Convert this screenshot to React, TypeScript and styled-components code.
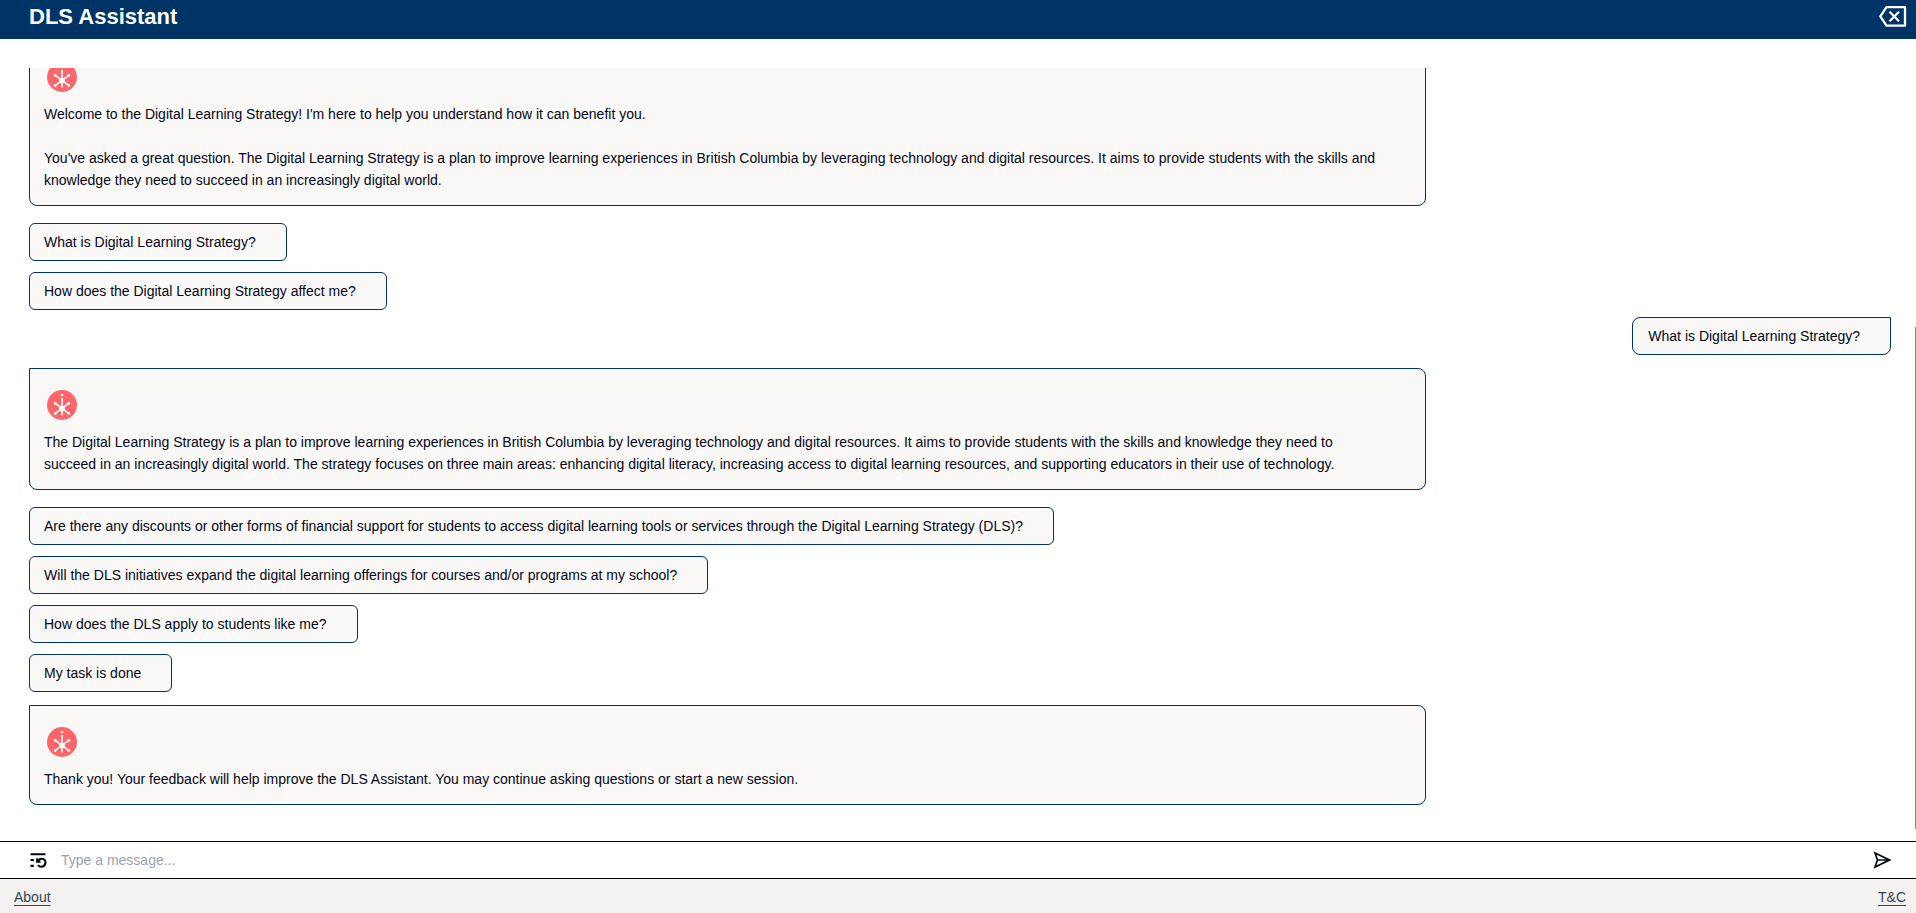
import React from "react";
import styled, { createGlobalStyle } from "styled-components";

const GlobalStyle = createGlobalStyle`
  *, *::before, *::after { box-sizing: border-box; }
  html, body, #root { height: 100%; }
  body {
    margin: 0;
    background: #fff;
    color: #020617;
    font-family: "Liberation Sans", Arial, sans-serif;
    font-size: 14px;
    line-height: 22px;
  }
  button, input { font: inherit; color: inherit; }
`;

const Page = styled.div`
  display: flex;
  flex-direction: column;
  height: 100%;
`;

const Header = styled.header`
  display: flex;
  flex: none;
  align-items: center;
  justify-content: space-between;
  height: 39px;
  padding: 0 9px 5px 29px;
  background: #003366;
  color: #fff;
`;

const Title = styled.h1`
  margin: 0;
  font-size: 22px;
  line-height: 28px;
`;

const IconButton = styled.button`
  display: flex;
  flex: none;
  padding: 0;
  border: 0;
  background: none;
  cursor: pointer;
`;

const Conversation = styled.main`
  position: relative;
  display: flex;
  flex: 1;
  min-height: 0;
  margin: 29px 0 12px;
`;

const Scroller = styled.div`
  display: flex;
  flex: 1;
  flex-direction: column-reverse;
  overflow-y: auto;
  padding: 0 25px 24px 29px;
  scrollbar-width: none;
`;

const ScrollThumb = styled.div`
  position: absolute;
  right: 0;
  bottom: 0;
  width: 1px;
  height: 66%;
  background: #888;
`;

const Messages = styled.div`
  display: flex;
  flex: none;
  flex-direction: column;
  align-items: flex-start;
`;

const BotCard = styled.article`
  width: 75%;
  margin-top: 13px;
  padding: 21px 40px 14px 14px;
  border: 1px solid #003366;
  border-radius: 0 8px 8px 8px;
  background: #faf9f8;
`;

const Avatar = styled.svg`
  display: block;
  width: 30px;
  height: 30px;
  margin: 0 0 11px 3px;
`;

const Text = styled.p`
  margin: 0;
  & + & { margin-top: 22px; }
`;

const Suggestions = styled.div`
  display: flex;
  flex-direction: column;
  align-items: flex-start;
  gap: 11px;
  margin-top: 17px;
`;

const Suggestion = styled.button`
  padding: 7px 30px 7px 14px;
  border: 1px solid #003366;
  border-radius: 6px;
  background: #faf9f8;
  text-align: left;
  cursor: pointer;
`;

const UserBubble = styled.div`
  align-self: flex-end;
  margin-top: 7px;
  padding: 7px 30px 7px 15px;
  border: 1px solid #003366;
  border-radius: 8px 0 8px 8px;
  background: #faf9f8;
`;

const Composer = styled.form`
  display: flex;
  flex: none;
  align-items: center;
  gap: 13px;
  height: 38px;
  padding: 0 25px 0 28px;
  border: solid #000;
  border-width: 1px 0;
`;

const MessageInput = styled.input`
  flex: 1;
  min-width: 0;
  padding: 0;
  border: 0;
  outline: 0;
  background: none;
  &::placeholder { color: #9ca3af; opacity: 1; }
`;

const Footer = styled.footer`
  display: flex;
  flex: none;
  justify-content: space-between;
  height: 34px;
  padding: 7px 10px 0 14px;
  background: #f3f2f1;
`;

const FooterLink = styled.a`
  color: #334155;
  text-underline-offset: 3px;
`;

function BotAvatar() {
  return (
    <Avatar viewBox="0 0 30 30" aria-hidden="true">
      <circle cx="15" cy="15" r="15" fill="#ff6669" />
      <path d="M15 8V25.5M8 13.2L22 23.6M22 13.2L8 23.6" stroke="#fff" strokeWidth="1.6" />
      <g fill="#fff">
        <circle cx="15" cy="18.4" r="2.8" />
        <circle cx="15" cy="5" r="1.3" />
        <circle cx="8.2" cy="13.3" r="1.4" />
        <circle cx="21.8" cy="13.3" r="1.4" />
        <circle cx="8.2" cy="23.5" r="1.4" />
        <circle cx="21.8" cy="23.5" r="1.4" />
      </g>
    </Avatar>
  );
}

function BotMessage({ paragraphs }: { paragraphs: string[] }) {
  return (
    <BotCard>
      <BotAvatar />
      {paragraphs.map((p) => (
        <Text key={p}>{p}</Text>
      ))}
    </BotCard>
  );
}

function SuggestionList({ items }: { items: string[] }) {
  return (
    <Suggestions>
      {items.map((item) => (
        <Suggestion type="button" key={item}>{item}</Suggestion>
      ))}
    </Suggestions>
  );
}

export default function App() {
  return (
    <Page>
      <GlobalStyle />
      <Header>
        <Title>DLS Assistant</Title>
        <IconButton type="button" aria-label="Close chat">
          <svg width="28" height="22" viewBox="0 0 28 22" fill="none" stroke="#fff" strokeWidth="2.3">
            <path d="M7.5 1.2H26V19.7H7.5L1.3 10.4Z" strokeLinejoin="round" />
            <path d="M10.5 5.7L20 15.2M20 5.7L10.5 15.2" />
          </svg>
        </IconButton>
      </Header>
      <Conversation>
        <Scroller>
          <Messages>
            <BotMessage
              paragraphs={[
                "Welcome to the Digital Learning Strategy! I'm here to help you understand how it can benefit you.",
                "You've asked a great question. The Digital Learning Strategy is a plan to improve learning experiences in British Columbia by leveraging technology and digital resources. It aims to provide students with the skills and knowledge they need to succeed in an increasingly digital world.",
              ]}
            />
            <SuggestionList
              items={["What is Digital Learning Strategy?", "How does the Digital Learning Strategy affect me?"]}
            />
            <UserBubble>What is Digital Learning Strategy?</UserBubble>
            <BotMessage
              paragraphs={[
                "The Digital Learning Strategy is a plan to improve learning experiences in British Columbia by leveraging technology and digital resources. It aims to provide students with the skills and knowledge they need to succeed in an increasingly digital world. The strategy focuses on three main areas: enhancing digital literacy, increasing access to digital learning resources, and supporting educators in their use of technology.",
              ]}
            />
            <SuggestionList
              items={[
                "Are there any discounts or other forms of financial support for students to access digital learning tools or services through the Digital Learning Strategy (DLS)?",
                "Will the DLS initiatives expand the digital learning offerings for courses and/or programs at my school?",
                "How does the DLS apply to students like me?",
                "My task is done",
              ]}
            />
            <BotMessage
              paragraphs={[
                "Thank you! Your feedback will help improve the DLS Assistant. You may continue asking questions or start a new session.",
              ]}
            />
          </Messages>
        </Scroller>
        <ScrollThumb />
      </Conversation>
      <Composer>
        <IconButton type="button" aria-label="Restart session">
          <svg width="20" height="20" viewBox="0 0 24 24" fill="none" stroke="currentColor" strokeWidth="2.5">
            <path d="M21 5H3M7 12H3M7 19H3" />
            <path d="M12 18a5 5 0 0 0 9-3 4.5 4.5 0 0 0-4.5-4.5c-1.33 0-2.54.54-3.41 1.41L11 14M11 10v4h4" />
          </svg>
        </IconButton>
        <MessageInput type="text" aria-label="Message" placeholder="Type a message..." />
        <IconButton type="submit" aria-label="Send">
          <svg width="18" height="18" viewBox="0 0 18 18" fill="none" stroke="currentColor" strokeWidth="1.7">
            <path d="M2 2L16.5 9L2 16L4.5 9ZM4.5 9H16" />
          </svg>
        </IconButton>
      </Composer>
      <Footer>
        <FooterLink href="#about">About</FooterLink>
        <FooterLink href="#terms">T&amp;C</FooterLink>
      </Footer>
    </Page>
  );
}
